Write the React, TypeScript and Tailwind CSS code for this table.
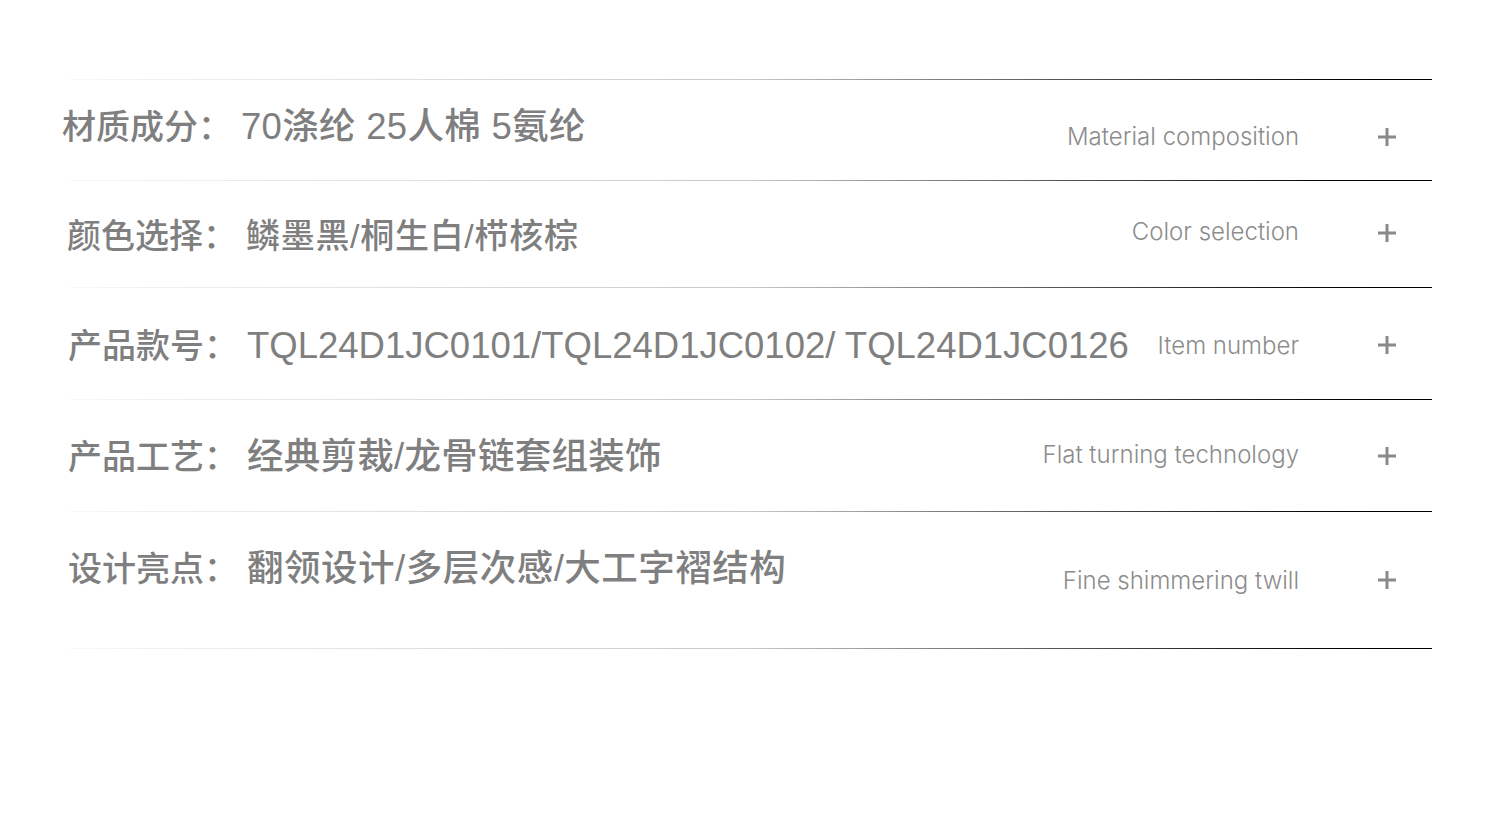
import React from 'react';

type Row = {
  label: string;
  value: string;
  en: string;
  height: string;
  cnTop: string;
  cnLeft: string;
  valueSize: string;
  track: string;
  enTop: string;
  plusTop: string;
};

const ROWS: Row[] = [
  { label: '材质成分：', value: '70涤纶 25人棉 5氨纶', en: 'Material composition', height: 'h-[100px]', cnTop: 'mt-[30px]', cnLeft: '-ml-[8px]', valueSize: 'text-[36.5px]', track: 'tracking-[0.3px]', enTop: 'mt-[45px]', plusTop: 'mt-[48px]' },
  { label: '颜色选择：', value: '鳞墨黑/桐生白/栉核棕', en: 'Color selection', height: 'h-[106px]', cnTop: 'mt-[38px]', cnLeft: '-ml-[3px]', valueSize: 'text-[34px]', track: 'tracking-[0.7px]', enTop: 'mt-[39px]', plusTop: 'mt-[43px]' },
  { label: '产品款号：', value: 'TQL24D1JC0101/TQL24D1JC0102/ TQL24D1JC0126', en: 'Item number', height: 'h-[111px]', cnTop: 'mt-[41px]', cnLeft: '-ml-[2px]', valueSize: 'text-[36.5px]', track: 'tracking-normal', enTop: 'mt-[46px]', plusTop: 'mt-[48px]' },
  { label: '产品工艺：', value: '经典剪裁/龙骨链套组装饰', en: 'Flat turning technology', height: 'h-[111px]', cnTop: 'mt-[40px]', cnLeft: '-ml-[2px]', valueSize: 'text-[36.5px]', track: 'tracking-[0.25px]', enTop: 'mt-[43px]', plusTop: 'mt-[47px]' },
  { label: '设计亮点：', value: '翻领设计/多层次感/大工字褶结构', en: 'Fine shimmering twill', height: 'h-[136px]', cnTop: 'mt-[40px]', cnLeft: '-ml-[2px]', valueSize: 'text-[36.5px]', track: 'tracking-[0.5px]', enTop: 'mt-[57px]', plusTop: 'mt-[59px]' },
];

const Line = () => (
  <div className="h-px w-full bg-gradient-to-r from-[#f7f7f7] via-[#c8c8c8] to-[#000000]" />
);

const Plus = () => (
  <svg width="18" height="18" viewBox="0 0 18 18" className="block">
    <rect x="0" y="7.5" width="18" height="3" fill="#8a8a8a" />
    <rect x="7.5" y="0" width="3" height="18" fill="#8a8a8a" />
  </svg>
);

export default function App() {
  return (
    <div className="w-[1500px] h-[821px] bg-white overflow-hidden">
      <div className="pt-[79px] pl-[70px] w-[1432px]">
        {ROWS.map((row) => (
          <div key={row.label}>
            <Line />
            <div className={`flex items-start ${row.height}`}>
              <div
                className={`${row.cnTop} ${row.cnLeft} flex items-center h-[34px] whitespace-nowrap font-medium text-[#7f7f7f]`}
                style={{ fontFamily: '"Liberation Sans", "Noto Sans CJK SC", sans-serif' }}
              >
                <span className="text-[34px] leading-none">{row.label}</span>
                <span className={`ml-[9px] leading-none ${row.valueSize} ${row.track}`}>{row.value}</span>
              </div>
              <div className="flex-1" />
              <div
                className={`${row.enTop} whitespace-nowrap text-[24px] leading-[24px] font-light text-[#8c8c8c]`}
                style={{ fontFamily: 'Inter, "Noto Sans", sans-serif' }}
              >
                {row.en}
              </div>
              <div className={`${row.plusTop} ml-[79px] mr-[36px]`}>
                <Plus />
              </div>
            </div>
          </div>
        ))}
        <Line />
      </div>
    </div>
  );
}
